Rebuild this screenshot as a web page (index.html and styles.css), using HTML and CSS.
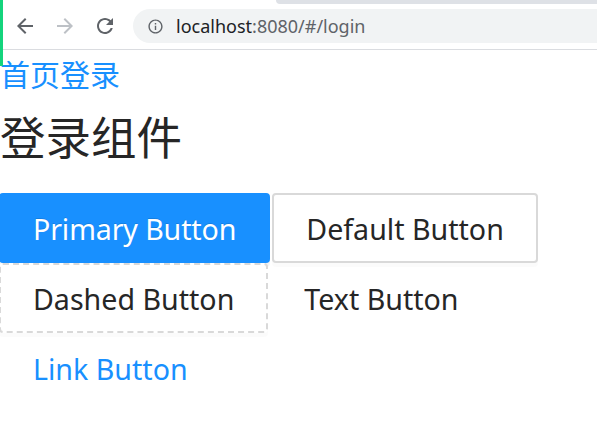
FILE: index.html
```html
<!DOCTYPE html>
<html lang="zh">
<head>
<meta charset="utf-8">
<title>login</title>
<link rel="stylesheet" href="styles.css">
</head>
<body>
<div class="chrome">
  <div class="tabstrip"></div>
  <svg class="nav-icon" viewBox="0 0 24 24" width="24" height="24"><path fill="#5f6368" d="M20 11H7.83l5.59-5.59L12 4l-8 8 8 8 1.41-1.41L7.83 13H20v-2z"/></svg>
  <svg class="nav-icon" viewBox="0 0 24 24" width="24" height="24"><path fill="#bdc1c6" d="M12 4l-1.41 1.41L16.17 11H4v2h12.17l-5.58 5.59L12 20l8-8z"/></svg>
  <svg class="nav-icon" viewBox="0 0 24 24" width="24" height="24"><path fill="#5f6368" d="M17.65 6.35C16.2 4.9 14.21 4 12 4c-4.42 0-7.99 3.58-7.99 8s3.57 8 7.99 8c3.73 0 6.84-2.55 7.73-6h-2.08c-.82 2.33-3.04 4-5.65 4-3.31 0-6-2.69-6-6s2.69-6 6-6c1.66 0 3.14.69 4.22 1.78L13 11h7V4l-2.35 2.35z"/></svg>
  <div class="omnibox">
    <svg class="info" viewBox="0 0 24 24" width="17" height="17"><path fill="#5f6368" d="M11 7h2v2h-2zm0 4h2v6h-2zm1-9C6.48 2 2 6.48 2 12s4.48 10 10 10 10-4.48 10-10S17.52 2 12 2zm0 18c-4.41 0-8-3.59-8-8s3.59-8 8-8 8 3.59 8 8-3.59 8-8 8z"/></svg>
    <span class="url"><span class="host">localhost</span>:8080/#/login</span>
  </div>
</div>
<div class="loadbar"></div>
<main class="page">
  <a class="home-link" href="#/">首页登录</a>
  <h1 class="title">登录组件</h1>
  <div class="buttons">
    <button class="btn btn-primary">Primary Button</button>
    <button class="btn btn-default">Default Button</button>
    <button class="btn btn-dashed">Dashed Button</button>
    <button class="btn btn-text">Text Button</button>
    <button class="btn btn-link">Link Button</button>
  </div>
</main>
</body>
</html>
```
FILE: styles.css
```css
html, body {
  margin: 0;
  padding: 0;
  background: #fff;
}
body {
  width: 597px;
  height: 432px;
  overflow: hidden;
  position: relative;
  font-family: "Noto Sans", "Noto Sans CJK SC", sans-serif;
}
.chrome {
  position: relative;
  display: flex;
  align-items: center;
  gap: 16px;
  padding: 9px 0 6px 13px;
  border-bottom: 1px solid #dadce0;
  background: #fff;
  overflow: hidden;
}
.tabstrip {
  position: absolute;
  left: 276px;
  right: 0;
  top: 0;
  height: 4px;
  background: #dee1e6;
  border-bottom-left-radius: 4px;
}
.nav-icon {
  flex: none;
  display: block;
}
.omnibox {
  flex: 1;
  height: 34px;
  border-radius: 17px 0 0 17px;
  background: #f1f3f4;
  display: flex;
  align-items: center;
  padding-left: 14px;
  gap: 12px;
}
.info {
  display: block;
  flex: none;
}
.url {
  font-family: "Noto Sans", sans-serif;
  font-size: 18px;
  color: #5f6368;
  white-space: nowrap;
}
.host {
  color: #202124;
}
.loadbar {
  position: absolute;
  left: 0;
  top: 0;
  width: 3px;
  height: 66px;
  background: #14d47c;
}
.page {
  color: #262626;
}
.home-link {
  display: block;
  font-family: "Noto Sans CJK SC", sans-serif;
  font-size: 30px;
  line-height: 47px;
  color: #1890ff;
  text-decoration: none;
}
.title {
  margin: 8px 0 27px;
  font-family: "Noto Sans CJK SC", sans-serif;
  font-size: 45.5px;
  line-height: 61px;
  font-weight: 400;
  color: #262626;
}
.buttons {
  display: flex;
  flex-wrap: wrap;
  column-gap: 2px;
  row-gap: 0;
  margin-left: -1px;
}
.btn {
  height: 70px;
  padding: 0 32px;
  border: 2px solid transparent;
  border-radius: 4px;
  background: transparent;
  font-family: "Noto Sans", "Noto Sans CJK SC", sans-serif;
  font-size: 28.6px;
  color: #262626;
  white-space: nowrap;
  cursor: pointer;
}
.btn-primary {
  background: #1890ff;
  border-color: #1890ff;
  color: #fff;
  letter-spacing: -0.12px;
  text-shadow: 0 -1px 0 rgba(0, 0, 0, 0.12);
  box-shadow: 0 4px 0 rgba(0, 0, 0, 0.045);
}
.btn-default {
  background: #fff;
  border-color: #d9d9d9;
  box-shadow: 0 4px 0 rgba(0, 0, 0, 0.015);
}
.btn-dashed {
  background: #fff;
  border: 2px dashed #d9d9d9;
  box-shadow: 0 4px 0 rgba(0, 0, 0, 0.015);
}
.btn-text {
  border-color: transparent;
}
.btn-link {
  color: #1890ff;
}
```
